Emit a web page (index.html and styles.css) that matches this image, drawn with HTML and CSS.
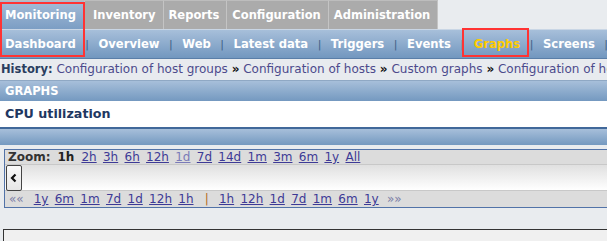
FILE: index.html
```html
<!DOCTYPE html>
<html>
<head>
<meta charset="utf-8">
<link rel="stylesheet" href="styles.css">
</head>
<body>
<div class="menu">
  <div class="tabs">
    <span class="tab tab-sel">Monitoring</span>
    <span class="tab">Inventory</span>
    <span class="tab">Reports</span>
    <span class="tab">Configuration</span>
    <span class="tab">Administration</span>
  </div>
  <div class="sub">
    <span class="sub-item sub-first">Dashboard</span><span class="sep">|</span>
    <span class="sub-item">Overview</span><span class="sep">|</span>
    <span class="sub-item">Web</span><span class="sep">|</span>
    <span class="sub-item">Latest data</span><span class="sep">|</span>
    <span class="sub-item">Triggers</span><span class="sep">|</span>
    <span class="sub-item">Events</span><span class="sep">|</span>
    <span class="sub-item sub-cur">Graphs</span><span class="sep">|</span>
    <span class="sub-item">Screens</span><span class="sep">|</span>
  </div>
  <div class="mark mark-mon"></div>
  <div class="mark mark-graphs"></div>
</div>
<div class="history"><b class="hist-label">History:</b> <a class="hl">Configuration of host groups</a> <span class="raquo">»</span> <a class="hl">Configuration of hosts</a> <span class="raquo">»</span> <a class="hl">Custom graphs</a> <span class="raquo">»</span> <a class="hl">Configuration of hosts</a></div>
<div class="hdr">GRAPHS</div>
<div class="title">CPU utilization</div>
<div class="bar"></div>
<div class="zoombox">
  <div class="zoomrow">
    <b class="zlabel">Zoom:</b>
    <b class="zcur">1h</b>
    <a class="zl">2h</a><a class="zl">3h</a><a class="zl">6h</a><a class="zl">12h</a><a class="zl zl-v">1d</a><a class="zl">7d</a><a class="zl">14d</a><a class="zl">1m</a><a class="zl">3m</a><a class="zl">6m</a><a class="zl">1y</a><a class="zl">All</a>
  </div>
  <div class="scroll">
    <div class="arrow"><svg width="10" height="12" viewBox="0 0 10 12"><path d="M6.5 2.5 L3 6 L6.5 9.5" fill="none" stroke="#111" stroke-width="2.2"/></svg></div>
  </div>
  <div class="navrow">
    <span class="quo">««</span>
    <a class="zl">1y</a><a class="zl">6m</a><a class="zl">1m</a><a class="zl">7d</a><a class="zl">1d</a><a class="zl">12h</a><a class="zl">1h</a>
    <span class="pipe">|</span>
    <a class="zl">1h</a><a class="zl">12h</a><a class="zl">1d</a><a class="zl">7d</a><a class="zl">1m</a><a class="zl">6m</a><a class="zl">1y</a>
    <span class="quo quo-r">»»</span>
  </div>
</div>
<div class="graphbox"></div>
</body>
</html>
```
FILE: styles.css
```css
html, body {
  margin: 0;
  padding: 0;
}
body {
  background: #e9ecef;
  font-family: "DejaVu Sans", Verdana, sans-serif;
  font-size: 12px;
  width: 607px;
  overflow: hidden;
}
.menu {
  position: relative;
}
.tabs {
  display: flex;
  height: 29px;
}
.tab {
  display: flex;
  align-items: center;
  padding: 0 7px 0 5px;
  background: #ababab;
  color: #fff;
  font-weight: bold;
  font-size: 11.5px;
  border-right: 1px solid #c4c4c4;
  border-top: 1px solid #bdbdbd;
}
.tab:nth-child(2) { padding-left: 8px; }
.tab-sel {
  background: linear-gradient(#a4bcd7, #7c9ec4);
  width: 72px;
}
.sub {
  display: flex;
  align-items: center;
  height: 28px;
  background: linear-gradient(#a7bfda, #7297bf);
  border-top: 1px solid #c9d6e5;
  border-bottom: 1px solid #5a7ea8;
  white-space: nowrap;
}
.sub-item {
  color: #fff;
  font-weight: bold;
  font-size: 11.6px;
  padding: 0 9.5px;
}
.sub-first { padding-left: 5px; }
.sub-cur { color: #ffcc00; }
.sep {
  color: #3f5f86;
  font-size: 11px;
}
.mark {
  position: absolute;
  border: 2px solid #f33;
  box-sizing: border-box;
}
.mark-mon {
  left: 0;
  top: 2px;
  width: 85px;
  height: 55px;
}
.mark-graphs {
  left: 462px;
  top: 28px;
  width: 67px;
  height: 29px;
}
.history {
  height: 21px;
  line-height: 21px;
  padding-left: 1px;
  background: #e8ebef;
  white-space: nowrap;
  overflow: hidden;
  border-bottom: 1px solid #8fa8c4;
}
.hist-label {
  color: #2a3d5e;
  font-size: 11.5px;
}
.hl {
  color: #4c4a8c;
}
.raquo {
  color: #111;
  font-weight: bold;
}
.hdr {
  height: 20px;
  line-height: 20px;
  padding-left: 5px;
  background: linear-gradient(#a7bfda, #7499c0);
  color: #fff;
  font-weight: bold;
  font-size: 11.5px;
}
.title {
  height: 26px;
  line-height: 26px;
  padding-left: 5px;
  background: #fff;
  color: #1f3761;
  font-weight: bold;
  font-size: 12.7px;
  border-bottom: 2px solid #41689a;
}
.bar {
  height: 16px;
  background: linear-gradient(#a7bfda, #7499c0);
  margin-bottom: 4px;
}
.zoombox {
  margin-left: 4px;
  border: 1px solid #5273a8;
  border-right: none;
}
.zoomrow {
  height: 14px;
  line-height: 14px;
  background: #dcdcdc;
  display: flex;
  align-items: center;
  padding-left: 3px;
  white-space: nowrap;
  border-bottom: 1px solid #c8c8c8;
}
.zlabel {
  color: #333;
  font-size: 12px;
  margin-right: 7px;
}
.zcur {
  color: #222;
  font-size: 12px;
  margin-right: 7px;
}
.zl {
  color: #3d3a96;
  text-decoration: underline;
  margin-right: 6.3px;
}
.zl-v {
  color: #7a7ab8;
}
.scroll {
  height: 25px;
  background: linear-gradient(#e0e0e0, #ffffff);
  position: relative;
}
.arrow {
  width: 14px;
  height: 24px;
  border: 1px solid #444;
  border-radius: 2px;
  background: linear-gradient(#fafafa, #e6e6e6);
  box-sizing: content-box;
  display: flex;
  align-items: center;
  justify-content: center;
  margin-left: 1px;
}
.navrow {
  height: 16px;
  line-height: 16px;
  background: #dcdcdc;
  display: flex;
  align-items: center;
  padding-left: 4px;
  white-space: nowrap;
  border-top: 1px solid #c8c8c8;
}
.quo {
  color: #7d7fa6;
  margin-right: 10px;
}
.quo-r {
  margin-left: 2px;
}
.pipe {
  color: #b36a22;
  margin: 0 10px 0 5px;
}
.graphbox {
  margin: 21px 0 0 3px;
  height: 20px;
  background: #f0f0f0;
  border-top: 1px solid #333;
  border-left: 1px solid #333;
}
```
